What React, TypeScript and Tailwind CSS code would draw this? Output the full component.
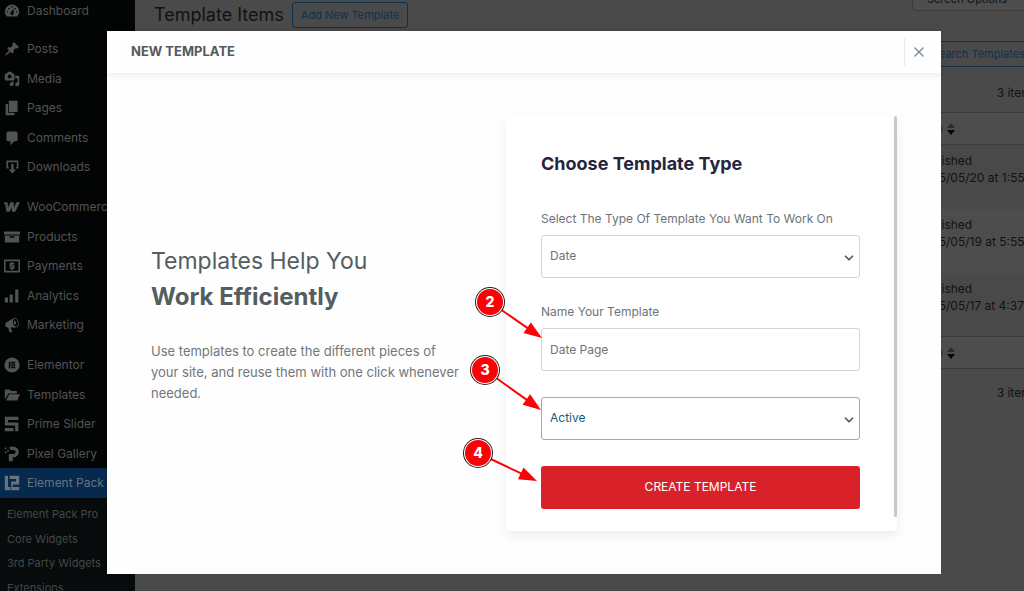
import { useState } from "react";
import type { ReactNode } from "react";
import { ChevronDown, X } from "lucide-react";

const Icon = ({ children }: { children: ReactNode }) => (
  <svg viewBox="0 0 20 20" className="w-4 h-4 flex-shrink-0" fill="currentColor" fillRule="evenodd" aria-hidden="true">
    {children}
  </svg>
);

const icons = {
  dashboard: <path d="M3.76 17h12.48c1.1-1.37 2.76-3.11 2.76-6a9 9 0 0 0-18 0c0 2.89 1.66 4.63 2.76 6zM10 4c.55 0 1 .45 1 1s-.45 1-1 1-1-.45-1-1 .45-1 1-1zM6 6c.55 0 1 .45 1 1s-.45 1-1 1-1-.45-1-1 .45-1 1-1zm8 0c.55 0 1 .45 1 1s-.45 1-1 1-1-.45-1-1 .45-1 1-1zm-5.37 5.55L12 7v6c0 1.1-.9 2-2 2s-2-.9-2-2c0-.57.24-1.08.63-1.45zM4 10c.55 0 1 .45 1 1s-.45 1-1 1-1-.45-1-1 .45-1 1-1zm12 0c.55 0 1 .45 1 1s-.45 1-1 1-1-.45-1-1 .45-1 1-1z" />,
  posts: <path d="M10.44 3.02l1.82-1.82 6.36 6.35-1.83 1.82c-1.05-.68-2.48-.57-3.41.36l-.75.75c-.92.93-1.04 2.35-.35 3.41l-1.83 1.82-2.41-2.41-2.8 2.79c-.42.42-3.38 2.71-3.8 2.29s1.86-3.39 2.28-3.81l2.79-2.79L4.1 9.36l1.83-1.82c1.05.69 2.48.57 3.4-.36l.75-.75c.93-.92 1.05-2.35.36-3.41z" />,
  media: <path d="M13 11V4c0-.55-.45-1-1-1h-1.67L9 1H5L3.67 3H2c-.55 0-1 .45-1 1v7c0 .55.45 1 1 1h10c.55 0 1-.45 1-1zM7 4.5c1.38 0 2.5 1.12 2.5 2.5S8.38 9.5 7 9.5 4.5 8.38 4.5 7 5.62 4.5 7 4.5zM14 6h5v10.5c0 1.38-1.12 2.5-2.5 2.5S14 17.88 14 16.5s1.12-2.5 2.5-2.5c.17 0 .34.02.5.05V9h-3V6zm-4 8.05V13h2v3.5c0 1.38-1.12 2.5-2.5 2.5S7 17.88 7 16.5 8.12 14 9.5 14c.17 0 .34.02.5.05z" />,
  pages: <path d="M6 15V1h11v14H6zm-1 1h8v3H2V5h3v11z" />,
  comments: <path d="M5 2h10c1.1 0 2 .9 2 2v8c0 1.1-.9 2-2 2h-2l-5 5v-5H5c-1.1 0-2-.9-2-2V4c0-1.1.9-2 2-2z" />,
  downloads: <path d="M3 2h15v10h-3v-2h1V4H5v6h1v2H3V2zm6 4h3v7h3l-4.500 5L6 13h3V6z" />,
  woo: <path d="M0 4h4.500l.5 7 3-7h4l.5 7 3-7H20l-6 12h-4l-.6-5L7 16H3L1.500 6.500 0 6z" />,
  products: <path d="M0 3h20v4H0V3zm1 5h18v9H1V8zm6 1v2h6V9H7z" />,
  payments: (
    <>
      <path d="M0 2h20v16H0V2zm2 2v12h16V4H2z" />
      <path d="M9 5h2v1.200h2V8H9.500v1H13v4.500h-2V15H9v-1.500H7v-1.800h4V11H7V6.200h2V5z" />
    </>
  ),
  analytics: <path d="M1 12h4v6H1v-6zm6-4h4v10H7V8zm7-6h4v16h-4V2z" />,
  marketing: <path d="M18.150 5.940c.46 1.620.38 3.220-.02 4.480-.42 1.280-1.260 2.180-2.300 2.480-.16.060-.26.060-.4.060l-.4.040h-6.800l2.220 5.500c.02.140-.06.260-.14.340-.08.100-.24.160-.34.160H6.950c-.1 0-.26-.06-.34-.16-.08-.08-.16-.2-.14-.34l-1-5.500H4.250c-.5.060-1.080-.18-1.540-.62s-.88-1.080-1.060-1.880c-.24-.8-.2-1.560-.02-2.200.18-.62.58-1.080 1.060-1.300l9.020-5.420c.3-.2.6-.36.980-.46 1.040-.3 2.240.1 3.220.98s1.820 2.220 2.240 3.840zm-2.580 5.980c.4-.1.740-.34 1.020-.7.580-.7.860-1.760.860-3.040 0-.64-.1-1.300-.28-1.980-.34-1.360-1.020-2.500-1.780-3.240s-1.680-1.100-2.460-.88c-.82.220-1.400.960-1.700 2-.32 1.040-.28 2.360.06 3.720.38 1.360 1 2.500 1.800 3.240.78.740 1.620 1.100 2.480.88zm-2.540-7.080c.22-.04.42-.02.62.040.38.160.76.480 1.020 1s.42 1.200.42 1.780c0 .3-.04.560-.12.800-.18.480-.44.840-.86.940-.34.100-.8-.06-1.140-.4s-.64-.86-.78-1.500c-.18-.62-.12-1.240.02-1.720s.48-.84.820-.94z" />,
  elementor: <path d="M10 .5a9.500 9.500 0 1 1 0 19 9.500 9.500 0 0 1 0-19zM6 6v8h2V6H6zm3 0v2h5V6H9zm0 3v2h5V9H9zm0 3v2h5v-2H9z" />,
  templates: <path d="M1 3h6l2 2h7v3H5.500L2 14.500 1 15V3zm5.500 6H20l-3.500 8H2.500l4-8z" />,
  slider: <path d="M1 1h17v4H5v3h13v11h-4v-7H1V1zm0 14h11v4H1v-4z" />,
  gallery: <path d="M7 1h5a6.500 6.500 0 0 1 0 13h-1v5H6v-9h6a2.500 2.500 0 0 0 0-5H8V3.500H7V1zM1 2h2v2H1V2zm3 3h2v2H4V5zM1 7h2v2H1V7z" />,
  pack: <path d="M1 1h4v14h3v4H1V1zm6 0h12v11H11v3h8v4H9V8h6V5H7V1z" />,
};

const menu = [
  [
    { label: "Posts", icon: icons.posts },
    { label: "Media", icon: icons.media },
    { label: "Pages", icon: icons.pages },
    { label: "Comments", icon: icons.comments },
    { label: "Downloads", icon: icons.downloads },
  ],
  [
    { label: "WooCommerce", icon: icons.woo },
    { label: "Products", icon: icons.products },
    { label: "Payments", icon: icons.payments },
    { label: "Analytics", icon: icons.analytics },
    { label: "Marketing", icon: icons.marketing },
  ],
  [
    { label: "Elementor", icon: icons.elementor },
    { label: "Templates", icon: icons.templates },
    { label: "Prime Slider", icon: icons.slider },
    { label: "Pixel Gallery", icon: icons.gallery },
    { label: "Element Pack", icon: icons.pack, active: true },
  ],
];

const subMenu = ["Element Pack Pro", "Core Widgets", "3rd Party Widgets", "Extensions"];

const rows = ["2025/05/20 at 1:55 pm", "2025/05/19 at 5:55 pm", "2025/05/17 at 4:37 pm"];

const Sidebar = () => (
  <nav className="w-[135px] flex-shrink-0 bg-[#030505] text-xs text-[#525354] whitespace-nowrap">
    <a href="#dashboard" className="flex h-[21px] items-center gap-[7px] pl-1">
      <Icon>{icons.dashboard}</Icon>
      Dashboard
    </a>
    <div className="mt-[13px] flex flex-col gap-[10px]">
      {menu.map((group, i) => (
        <ul key={i}>
          {group.map((item) => (
            <li key={item.label} className="h-[30px] even:h-[29px]">
              <a
                href="#menu"
                className={`flex h-full items-center gap-[7px] pl-1 ${"active" in item ? "bg-[#06294d] text-[#66737f]" : ""}`}
              >
                <Icon>{item.icon}</Icon>
                {item.label}
              </a>
            </li>
          ))}
        </ul>
      ))}
    </div>
    <ul className="bg-[#070b0c] pt-1 pl-[7px] text-[11px] text-[#444748]">
      {subMenu.map((label) => (
        <li key={label} className="h-[25px] even:h-6">
          <a href="#submenu" className="flex h-full items-center">{label}</a>
        </li>
      ))}
    </ul>
  </nav>
);

const SortLabel = () => (
  <a href="#sort" className="flex items-center gap-1 text-[#0b2a44]">
    Date
    <svg viewBox="0 0 8 14" className="w-2 h-3.5" aria-hidden="true">
      <path d="M4 1l4 5H0z" fill="#2b2b2b" />
      <path d="M0 8h8l-4 5z" fill="#050505" />
    </svg>
  </a>
);

const ListPage = () => (
  <main className="min-w-0 flex-1 overflow-hidden pl-[19px] text-xs text-[#101214]">
    <div className="-mr-[14px] flex flex-col whitespace-nowrap">
      <div className="flex h-[41px] items-start justify-between">
        <div className="flex items-center gap-2">
          <h1 className="text-lg leading-[30px]">Template Items</h1>
          <button className="h-[26px] rounded-[3px] border border-[#0c3250] px-2 text-[11px] text-[#0c3250]">Add New Template</button>
        </div>
        <button className="flex h-[11px] w-[126px] items-end justify-start rounded-b border border-t-0 border-[#3c3c3c] bg-[#4e4e4e] pb-[3px] pl-3.5 text-[11px]">
          Screen Options
        </button>
      </div>
      <div className="flex justify-end">
        <button className="h-[26px] rounded-[3px] border border-[#0c3250] px-3 text-[11px] text-[#0c3250]">Search Templates</button>
      </div>
      <p className="flex h-[45px] items-center justify-end pt-1.5">3 items</p>
      <table className="w-full table-fixed border border-[#3a3b3c] text-left">
        <thead>
          <tr className="h-8 border-b border-[#3a3b3c] bg-[#4d4d4d]">
            <th />
            <th className="w-[129px] px-2 font-normal"><SortLabel /></th>
          </tr>
        </thead>
        <tbody>
          {rows.map((date) => (
            <tr key={date} className="h-16 align-top odd:bg-[#494949] even:bg-[#4d4d4d]">
              <td />
              <td className="px-2 pt-[7px] leading-[17px]">
                Published
                <br />
                {date}
              </td>
            </tr>
          ))}
        </tbody>
        <tfoot>
          <tr className="h-8 border-t border-[#3a3b3c] bg-[#4d4d4d]">
            <td />
            <td className="px-2"><SortLabel /></td>
          </tr>
        </tfoot>
      </table>
      <p className="flex h-[45px] items-center justify-end pt-0.5">3 items</p>
    </div>
  </main>
);

const fieldClass = "h-[43px] w-full appearance-none rounded-[3px] border bg-white px-2 text-xs outline-none";

const TemplateForm = () => {
  const [type, setType] = useState("Date");
  const [name, setName] = useState("");
  const [status, setStatus] = useState("Active");

  return (
    <form
      className="relative flex w-[391px] flex-shrink-0 flex-col rounded-sm bg-white pt-[35px] pr-[37px] pb-[22px] pl-[35px] shadow-[0_5px_12px_rgba(0,0,0,0.07)]"
      onSubmit={(e) => e.preventDefault()}
    >
      <h2 className="text-lg leading-[26px] font-bold text-[#25253d]">Choose Template Type</h2>

      <label htmlFor="type" className="mt-8 text-xs leading-[20px] text-[#6d7478]">Select The Type Of Template You Want To Work On</label>
      <div className="relative mt-[6px]">
        <select id="type" value={type} onChange={(e) => setType(e.target.value)} className={`${fieldClass} border-[#d2d5d8] text-[#6d7478]`}>
          <option>Date</option>
        </select>
        <ChevronDown className="pointer-events-none absolute top-4 right-1 h-3.5 w-3.5 text-[#50575e]" strokeWidth={3} />
      </div>

      <label htmlFor="name" className="mt-6 text-xs leading-[20px] text-[#6d7478]">Name Your Template</label>
      <input
        id="name"
        placeholder="Date Page"
        value={name}
        onChange={(e) => setName(e.target.value)}
        className={`${fieldClass} mt-[6px] border-[#d2d5d8] text-[#6d7478] placeholder:text-[#6d7478]`}
      />

      <div className="relative mt-[26px]">
        <select aria-label="Status" value={status} onChange={(e) => setStatus(e.target.value)} className={`${fieldClass} border-[#a3a9b0] text-[#16557f]`}>
          <option>Active</option>
        </select>
        <ChevronDown className="pointer-events-none absolute top-4 right-1 h-3.5 w-3.5 text-[#50575e]" strokeWidth={3} />
      </div>

      <button type="submit" className="mt-[26px] h-[43px] rounded-[3px] bg-[#d9212a] text-xs text-white">CREATE TEMPLATE</button>

      {/* Scroll thumb */}
      <span className="absolute top-0 right-0 bottom-3.5 w-[3px] rounded-full bg-[#c8c8c8]" />
    </form>
  );
};

const steps = [
  { n: 2, x: 490, y: 302, tipX: 542, tipY: 338 },
  { n: 3, x: 485, y: 370, tipX: 541, tipY: 410 },
  { n: 4, x: 478, y: 453, tipX: 537, tipY: 481 },
];

// Numbered markers that float over the dialog
const Steps = () => (
  <svg className="pointer-events-none absolute top-0 left-0" width="1024" height="591" viewBox="0 0 1024 591">
    {steps.map(({ n, x, y, tipX, tipY }) => {
      const angle = (Math.atan2(tipY - y, tipX - x) * 180) / Math.PI;
      return (
        <g key={n}>
          <line x1={x} y1={y} x2={tipX} y2={tipY} stroke="#fb0207" strokeWidth="2" strokeDasharray={`${Math.hypot(tipX - x, tipY - y) - 10} 20`} />
          <path d="M0 0L-18 -6.500V6.500z" fill="#fb0207" transform={`translate(${tipX} ${tipY}) rotate(${angle})`} />
          <circle cx={x} cy={y} r="15" fill="#2b1a1a" />
          <circle cx={x} cy={y} r="14" fill="#fff" />
          <circle cx={x} cy={y} r="13" fill="#fb0207" />
          <text x={x} y={y + 5} textAnchor="middle" fontSize="14" fontWeight="800" fill="#fff">{n}</text>
        </g>
      );
    })}
  </svg>
);

const Dialog = () => (
  <div className="absolute inset-0 flex flex-col pt-[31px] pr-[83px] pb-[17px] pl-[107px]">
    <section role="dialog" aria-label="New Template" className="flex flex-1 flex-col bg-[#fefefe]">
      <header className="flex h-[42px] items-center justify-between pl-6 shadow-[0_1px_8px_rgba(0,0,0,0.1)]">
        <h2 className="text-[13px] font-bold text-[#54595c]">NEW TEMPLATE</h2>
        <button aria-label="Close" className="flex h-7 w-[37px] items-center justify-center border-l border-[#e6e8ea] pr-2 text-[#7d8b98]">
          <X className="h-4 w-4" />
        </button>
      </header>
      <div className="flex flex-1 items-center justify-between px-11 pb-px">
        <div className="max-w-[313px] text-[#545d61]">
          <h3 className="text-[23px] leading-9">
            Templates Help You
            <br />
            <strong className="text-2xl leading-9 font-bold">Work Efficiently</strong>
          </h3>
          <p className="mt-[26px] text-[13px] leading-[21px] text-[#70777a]">
            Use templates to create the different pieces of your site, and reuse them with one click whenever needed.
          </p>
        </div>
        <TemplateForm />
      </div>
    </section>
  </div>
);

export default function App() {
  return (
    <div className="relative flex h-screen overflow-hidden bg-[#4a4a4a] font-['Inter',sans-serif]">
      <Sidebar />
      <ListPage />
      <Dialog />
      <Steps />
    </div>
  );
}
